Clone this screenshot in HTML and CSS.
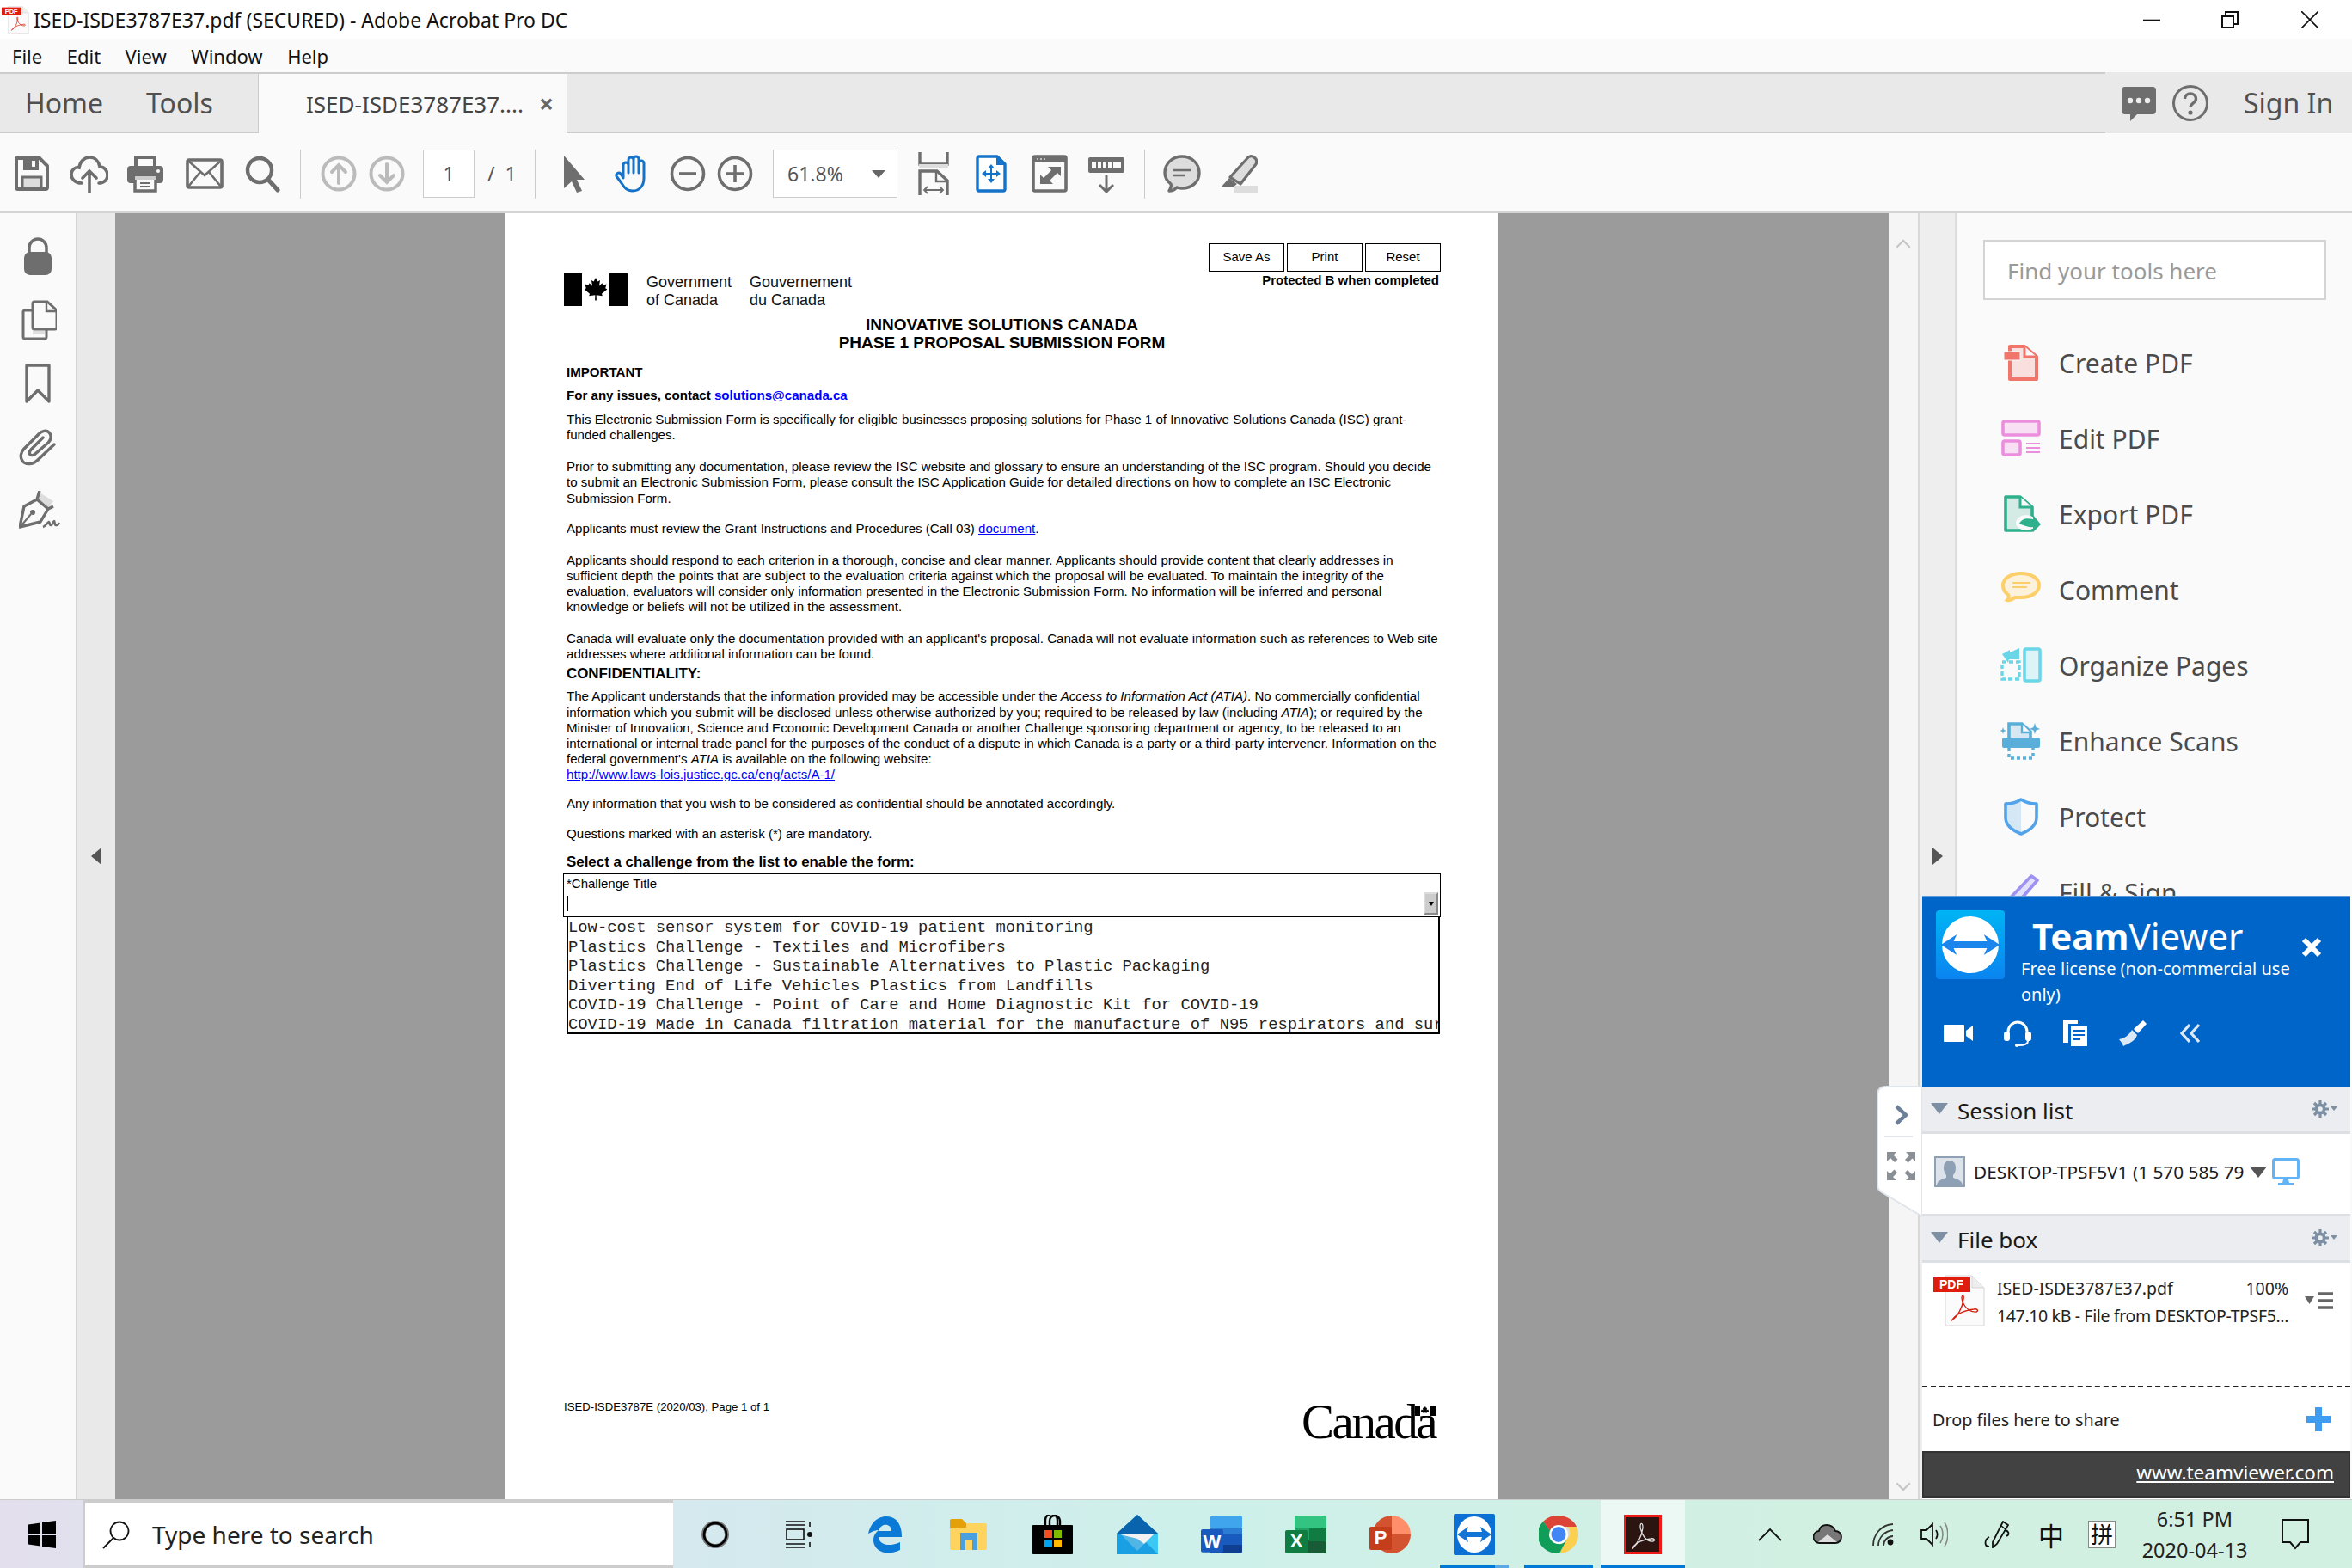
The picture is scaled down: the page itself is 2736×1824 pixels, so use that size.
FILE: index.html
```html
<!DOCTYPE html>
<html lang="en">
<head>
<meta charset="utf-8">
<title>ISED-ISDE3787E37.pdf (SECURED) - Adobe Acrobat Pro DC</title>
<link rel="stylesheet" href="styles.css">
</head>
<body>
<svg class="sprite" width="0" height="0">
  <symbol id="pdfdoc" viewBox="0 0 60 60">
    <path d="M14 1h31l14 14v44H14z" fill="#fbfbfb" stroke="#d5d5d5" stroke-width="1"/>
    <path d="M45 1v14h14" fill="#eee" stroke="#d5d5d5"/>
    <rect x="0" y="3" width="43" height="17" fill="#e01c0c"/>
    <text x="21" y="16" class="pdf-tag">PDF</text>
    <path d="M22 52c6-3 12-14 13-24 1-5-2-5-2-1 1 8 8 17 17 16 3-1 1-4-3-3-9 1-20 5-24 11-2 2-2 3-1 1z" fill="none" stroke="#d5200f" stroke-width="1.4"/>
  </symbol>
  <symbol id="gear" viewBox="0 0 30 20">
    <g fill="#7d8fa3"><circle cx="10" cy="10" r="6.5"/><g stroke="#7d8fa3" stroke-width="3.2"><path d="M10 0v20M0 10h20M3 3l14 14M17 3L3 17"/></g></g>
    <circle cx="10" cy="10" r="2.8" fill="#ebedf0"/><path d="M22 7h8l-4 5z" fill="#7d8fa3"/>
  </symbol>
</svg>

<header class="titlebar">
  <svg class="title-icon" width="32" height="32"><use href="#pdfdoc"/></svg>
  <span class="title-text">ISED-ISDE3787E37.pdf (SECURED) - Adobe Acrobat Pro DC</span>
  <div class="win-ctrls">
    <svg width="20" height="20" viewBox="0 0 20 20"><path d="M0 10.5h20" stroke="#111" stroke-width="1.6"/></svg>
    <svg width="20" height="20" viewBox="0 0 20 20"><path d="M1 6h13v13H1zM5 6V1h14v14h-5" fill="none" stroke="#111" stroke-width="2"/></svg>
    <svg width="20" height="20" viewBox="0 0 20 20"><path d="M0 0l20 20M20 0L0 20" stroke="#111" stroke-width="1.6"/></svg>
  </div>
</header>

<nav class="menubar"><span>File</span><span>Edit</span><span>View</span><span>Window</span><span>Help</span></nav>

<div class="tabbar">
  <div class="tab-nav"><span>Home</span><span>Tools</span></div>
  <div class="tab-active"><span class="tab-name">ISED-ISDE3787E37....</span><span class="tab-x">×</span></div>
  <div class="tab-fill"></div>
  <div class="tab-right">
    <svg width="42" height="42" viewBox="0 0 42 42"><path d="M5 2h32a4 4 0 0 1 4 4v24a4 4 0 0 1-4 4H19L11 42v-8H5a4 4 0 0 1-4-4V6a4 4 0 0 1 4-4z" fill="#6e6e6e"/><circle cx="11" cy="18" r="3.2" fill="#eee"/><circle cx="21" cy="18" r="3.2" fill="#eee"/><circle cx="31" cy="18" r="3.2" fill="#eee"/></svg>
    <svg width="42" height="42" viewBox="0 0 42 42"><circle cx="21" cy="21" r="19.5" fill="none" stroke="#6e6e6e" stroke-width="3"/><path d="M14.5 16c0-8 13-8 13 0 0 5-6.500 5-6.500 10" fill="none" stroke="#6e6e6e" stroke-width="3.400"/><circle cx="21" cy="32" r="2.600" fill="#6e6e6e"/></svg>
    <span class="sign-in">Sign In</span>
  </div>
</div>

<div class="toolbar">
  <svg class="tb" viewBox="0 0 44 44"><path d="M4 4h27l9 9v25a2 2 0 0 1-2 2H6a2 2 0 0 1-2-2z" fill="#fafafa" stroke="#6e6e6e" stroke-width="4" stroke-linejoin="round"/><path d="M12 4h18v14H12z" fill="#6e6e6e"/><rect x="22" y="7" width="4" height="7" fill="#fafafa"/><rect x="11" y="26" width="22" height="13" fill="#ddd" stroke="#6e6e6e" stroke-width="3"/></svg>
  <svg class="tb" viewBox="0 0 44 44"><path d="M13 33C5 33 1 28 1 23c0-6 5-9 9-8C11 8 16 3 22 3c7 0 11 5 12 11 5 0 9 4 9 10 0 5-4 9-10 9" fill="none" stroke="#6e6e6e" stroke-width="3.600" stroke-linecap="round"/><path d="M22 44V19M14 27l8-8 8 8" fill="none" stroke="#6e6e6e" stroke-width="3.600" stroke-linecap="round"/></svg>
  <svg class="tb m-print" viewBox="0 0 44 44"><path d="M11 3h22v12H11z" fill="#fafafa" stroke="#6e6e6e" stroke-width="4"/><rect x="1" y="13" width="42" height="20" rx="4" fill="#6e6e6e"/><rect x="10" y="26" width="24" height="16" fill="#fafafa" stroke="#6e6e6e" stroke-width="3.500"/><rect x="10" y="25" width="24" height="4" fill="#ccc"/><path d="M16 33h12M16 37h12" stroke="#6e6e6e" stroke-width="2"/><circle cx="37" cy="19" r="2" fill="#fafafa"/></svg>
  <svg class="tb m-mail" viewBox="0 0 44 44"><rect x="2" y="6" width="40" height="32" rx="2" fill="none" stroke="#6e6e6e" stroke-width="3.600"/><path d="M3 7l19 17L41 7M3 37l14-17M41 37L27 20" fill="none" stroke="#6e6e6e" stroke-width="2.600"/></svg>
  <svg class="tb m-find" viewBox="0 0 44 44"><circle cx="19" cy="18" r="14" fill="none" stroke="#6e6e6e" stroke-width="4.400"/><path d="M29 29l11 12" stroke="#6e6e6e" stroke-width="5" stroke-linecap="round"/></svg>
  <i class="tb-sep m-sep1"></i>
  <svg class="tb m-up" viewBox="0 0 44 44"><circle cx="22" cy="22" r="18.500" fill="none" stroke="#bbb" stroke-width="4"/><path d="M22 33V12M14 20l8-8 8 8" fill="none" stroke="#bbb" stroke-width="4" stroke-linecap="round"/></svg>
  <svg class="tb m-down" viewBox="0 0 44 44"><circle cx="22" cy="22" r="18.500" fill="none" stroke="#bbb" stroke-width="4"/><path d="M22 11v21M14 24l8 8 8-8" fill="none" stroke="#bbb" stroke-width="4" stroke-linecap="round"/></svg>
  <div class="page-input">1</div>
  <span class="page-total">/&nbsp;&nbsp;1</span>
  <i class="tb-sep m-sep2"></i>
  <svg class="tb m-cursor" viewBox="0 0 44 44"><path d="M10 1l24 28-9 0 6 13-6 2-6-13-9 8z" fill="#6e6e6e"/></svg>
  <svg class="tb m-hand" viewBox="-3 0 44 44"><path d="M11 27V12a3 3 0 0 1 6 0v9V6a3 3 0 0 1 6 0v15V5a3 3 0 0 1 6 0v16V10a3 3 0 0 1 6 0v17c0 9-5 15-13 15-7 0-10-4-13-9l-6-8a3 3 0 0 1 5-3z" fill="none" stroke="#1473c9" stroke-width="3" stroke-linejoin="round"/></svg>
  <svg class="tb m-minus" viewBox="0 0 44 44"><circle cx="22" cy="22" r="18.500" fill="none" stroke="#6e6e6e" stroke-width="3.600"/><path d="M12 22h20" stroke="#6e6e6e" stroke-width="3.600"/></svg>
  <svg class="tb m-plus" viewBox="0 0 44 44"><circle cx="22" cy="22" r="18.500" fill="none" stroke="#6e6e6e" stroke-width="3.600"/><path d="M12 22h20M22 12v20" stroke="#6e6e6e" stroke-width="3.600"/></svg>
  <div class="zoom-box"><span>61.8%</span><i class="caret"></i></div>
  <svg class="tb m-fitw" viewBox="0 0 44 50"><path d="M6 0v14h32V0" fill="none" stroke="#6e6e6e" stroke-width="3.400"/><rect x="5" y="14" width="34" height="4" fill="#ddd"/><path d="M6 50V22h20l12 11v17" fill="none" stroke="#6e6e6e" stroke-width="3.400"/><path d="M25 22v12h13" fill="none" stroke="#6e6e6e" stroke-width="2.400"/><path d="M11 44h22M15 40l-4 4 4 4M29 40l4 4-4 4" fill="none" stroke="#6e6e6e" stroke-width="1.800"/></svg>
  <svg class="tb m-fitp" viewBox="0 0 44 44"><path d="M8 2h21l9 9v29a2 2 0 0 1-2 2H8a2 2 0 0 1-2-2V4a2 2 0 0 1 2-2z" fill="#fff" stroke="#1473c9" stroke-width="3.400" stroke-linejoin="round"/><path d="M28 2v10h10" fill="#1473c9"/><path d="M22 11l4 5h-3v5h5v-3l5 4-5 4v-3h-5v5h3l-4 5-4-5h3v-5h-5v3l-5-4 5-4v3h5v-5h-3z" fill="#1473c9"/></svg>
  <svg class="tb m-full" viewBox="0 0 44 44"><rect x="4" y="2" width="38" height="40" rx="2" fill="none" stroke="#6e6e6e" stroke-width="3.600"/><rect x="4" y="2" width="38" height="7" fill="#6e6e6e"/><path d="M8 5h2M12 5h2M16 5h2" stroke="#ddd" stroke-width="1.400"/><path d="M36 14v11l-4-4-9 9 4 4H12V23l4 4 9-9-4-4z" fill="#6e6e6e"/></svg>
  <svg class="tb m-rule" viewBox="0 0 44 44"><rect x="1" y="3" width="42" height="18" rx="2" fill="#6e6e6e"/><rect x="5" y="8" width="34" height="8" fill="#fafafa"/><path d="M11 8v8M17 8v8M23 8v8M29 8v8" stroke="#6e6e6e" stroke-width="2"/><path d="M22 24v19M14 35l8 8 8-8" fill="none" stroke="#6e6e6e" stroke-width="3"/></svg>
  <i class="tb-sep m-sep3"></i>
  <svg class="tb m-comm" viewBox="0 0 44 44"><path d="M22 2c11 0 20 8 20 19s-9 18-20 18c-3 0-4-.500-6-1-2 2-5 4-9 4 2-3 3-5 2-8-4-3-7-8-7-13C2 10 11 2 22 2z" fill="#ddd" stroke="#6e6e6e" stroke-width="3.400" stroke-linejoin="round"/><path d="M12 18h20M12 24h14" stroke="#6e6e6e" stroke-width="2.400"/></svg>
  <svg class="tb m-high" viewBox="0 0 44 44"><path d="M33 3q4-3 8 1 3 3 1 7L24 34l-12-8z" fill="#ddd" stroke="#6e6e6e" stroke-width="3.200" stroke-linejoin="round"/><path d="M11 27l9 7-5 4H1z" fill="#6e6e6e"/><rect x="16" y="36" width="28" height="8" fill="#ddd"/></svg>
</div>

<main class="main">
  <aside class="rail">
    <svg width="44" height="46" viewBox="0 0 44 46"><path d="M12 19v-6a10 10 0 0 1 20 0v6" fill="none" stroke="#6e6e6e" stroke-width="3.500"/><rect x="6" y="18" width="32" height="27" rx="7" fill="#6e6e6e"/></svg>
    <svg width="44" height="46" viewBox="0 0 44 46"><path d="M18 2h15l11 10v20a2 2 0 0 1-2 2H18a2 2 0 0 1-2-2V4a2 2 0 0 1 2-2z" fill="none" stroke="#6e6e6e" stroke-width="3"/><path d="M32 2v11h12" fill="none" stroke="#6e6e6e" stroke-width="2.400"/><path d="M15 12H7a2 2 0 0 0-2 2v29a2 2 0 0 0 2 2h23a2 2 0 0 0 2-2v-9" fill="none" stroke="#6e6e6e" stroke-width="3"/><rect x="16" y="36" width="14" height="4" fill="#ddd"/></svg>
    <svg width="44" height="46" viewBox="0 0 44 46"><path d="M9 2h26v42L22 31 9 44z" fill="none" stroke="#6e6e6e" stroke-width="3.400" stroke-linejoin="round"/></svg>
    <svg width="44" height="46" viewBox="0 0 44 46"><path d="M41 20L22 38c-6 6-15 6-18 1-3-4-2-10 2-14l17-17c4-4 9-5 12-2 3 3 3 8-1 12L19 31c-2 2-5 2-6 1-1-2-1-4 1-6l14-14" fill="none" stroke="#6e6e6e" stroke-width="3.400" stroke-linecap="round"/></svg>
    <svg width="48" height="46" viewBox="0 0 48 46"><path d="M24 2l16 10-6 8-12-9z" fill="#ddd"/><path d="M24 0l-3 10L6 18 1 42l24-6 9-15 6-3M21 10l13 11" fill="none" stroke="#6e6e6e" stroke-width="3.400" stroke-linejoin="round"/><path d="M3 40l11-13" stroke="#6e6e6e" stroke-width="2"/><circle cx="16" cy="25" r="3" fill="#6e6e6e"/><path d="M28 42c3-1 5-5 7-6 1 0 0 4 2 4s3-5 4-5 0 5 2 5 3-1 4-3" fill="none" stroke="#6e6e6e" stroke-width="2.600"/></svg>
  </aside>
  <div class="nav-col"><i class="arrow-left"></i></div>
  <section class="viewer">
    <article class="page">
      <div class="doc-head">
        <div class="gov">
          <svg class="gov-flag" viewBox="0 0 74 38"><rect width="21" height="38"/><rect x="53" width="21" height="38"/><svg x="23" y="5" width="28" height="28" viewBox="0 0 20 20"><path d="M10 0L11.700 3.200 13.600 2.200 12.800 7 15.300 4.400 16 6 19 5.400 18 8.800 19.500 9.600 15 13.400 15.600 15.200 10.500 14.400 10.600 19H9.400L9.500 14.400 4.400 15.200 5 13.400 .5 9.600 2 8.800 1 5.400 4 6 4.700 4.400 7.200 7 6.400 2.200 8.300 3.200z"/></svg></svg>
          <div class="gov-name">Government<br>of Canada</div>
          <div class="gov-name">Gouvernement<br>du Canada</div>
        </div>
        <div class="doc-actions">
          <div class="doc-btns"><span class="doc-btn">Save As</span><span class="doc-btn">Print</span><span class="doc-btn">Reset</span></div>
          <div class="protected">Protected B when completed</div>
        </div>
      </div>
      <h1 class="doc-title">INNOVATIVE SOLUTIONS CANADA<br>PHASE 1 PROPOSAL SUBMISSION FORM</h1>
      <p class="p b m15">IMPORTANT</p>
      <p class="p b m9">For any issues, contact <a href="#">solutions@canada.ca</a></p>
      <p class="p m10">This Electronic Submission Form is specifically for eligible businesses proposing solutions for Phase 1 of Innovative Solutions Canada (ISC) grant-<br>funded challenges.</p>
      <p class="p m19">Prior to submitting any documentation, please review the ISC website and glossary to ensure an understanding of the ISC program. Should you decide<br>to submit an Electronic Submission Form, please consult the ISC Application Guide for detailed directions on how to complete an ISC Electronic<br>Submission Form.</p>
      <p class="p m17">Applicants must review the Grant Instructions and Procedures (Call 03) <a href="#">document</a>.</p>
      <p class="p m19">Applicants should respond to each criterion in a thorough, concise and clear manner. Applicants should provide content that clearly addresses in<br>sufficient depth the points that are subject to the evaluation criteria against which the proposal will be evaluated. To maintain the integrity of the<br>evaluation, evaluators will consider only information presented in the Electronic Submission Form. No information will be inferred and personal<br>knowledge or beliefs will not be utilized in the assessment.</p>
      <p class="p m19">Canada will evaluate only the documentation provided with an applicant's proposal. Canada will not evaluate information such as references to Web site<br>addresses where additional information can be found.</p>
      <p class="p h m5">CONFIDENTIALITY:</p>
      <p class="p m8">The Applicant understands that the information provided may be accessible under the <em>Access to Information Act (ATIA)</em>. No commercially confidential<br>information which you submit will be disclosed unless otherwise authorized by you; required to be released by law (including <em>ATIA</em>); or required by the<br>Minister of Innovation, Science and Economic Development Canada or another Challenge sponsoring department or agency, to be released to an<br>international or internal trade panel for the purposes of the conduct of a dispute in which Canada is a party or a third-party intervener. Information on the<br>federal government's <em>ATIA</em> is available on the following website:<br><a href="#">http://www.laws-lois.justice.gc.ca/eng/acts/A-1/</a></p>
      <p class="p m16">Any information that you wish to be considered as confidential should be annotated accordingly.</p>
      <p class="p m17">Questions marked with an asterisk (*) are mandatory.</p>
      <p class="p h m15">Select a challenge from the list to enable the form:</p>
      <div class="field">
        <div class="field-label">*Challenge Title</div>
        <div class="field-row"><i class="field-caret"></i><span class="field-btn"><i></i></span></div>
      </div>
      <ul class="list">
        <li>Low-cost sensor system for COVID-19 patient monitoring</li>
        <li>Plastics Challenge - Textiles and Microfibers</li>
        <li>Plastics Challenge - Sustainable Alternatives to Plastic Packaging</li>
        <li>Diverting End of Life Vehicles Plastics from Landfills</li>
        <li>COVID-19 Challenge - Point of Care and Home Diagnostic Kit for COVID-19</li>
        <li>COVID-19 Made in Canada filtration material for the manufacture of N95 respirators and surgical masks</li>
      </ul>
      <div class="doc-foot">
        <span class="doc-ref">ISED-ISDE3787E (2020/03), Page 1 of 1</span>
        <span class="wordmark">Canada<svg class="wm-flag" viewBox="0 0 24 12"><rect width="6" height="12"/><rect x="18" width="6" height="12"/><path d="M12 1l1 2 1-.5-.3 3 1.500-1 1 2-2.500 2-2.200-.3-2.200.3-2.500-2 1-2 1.500 1-.3-3 1 .5z"/></svg></span>
      </div>
    </article>
  </section>
  <div class="scroll-col"><i class="scroll-up"></i><i class="scroll-down"></i></div>
  <div class="handle-col"><i class="arrow-right"></i></div>
  <aside class="tools">
    <div class="find">Find your tools here</div>
    <ul class="tool-list">
      <li><svg width="48" height="44" viewBox="0 0 48 44"><path d="M11 3h17l14 12v26H11z" fill="#f9e0de" stroke="#f0756a" stroke-width="4" stroke-linejoin="round"/><path d="M28 3v12h14" fill="#fafafa" stroke="#f0756a" stroke-width="3"/><rect x="4" y="9" width="19" height="10" fill="#f0756a" stroke="#fafafa" stroke-width="1"/></svg><span>Create PDF</span></li>
      <li><svg width="48" height="44" viewBox="0 0 48 44"><rect x="3" y="2" width="42" height="16" rx="2" fill="#f8dff4" stroke="#ec8ede" stroke-width="3.600"/><rect x="3" y="25" width="20" height="16" rx="2" fill="#f8dff4" stroke="#ec8ede" stroke-width="3.600"/><path d="M30 28h16M30 33h16M30 38h16" stroke="#ec8ede" stroke-width="1.800"/></svg><span>Edit PDF</span></li>
      <li><svg width="48" height="44" viewBox="0 0 48 44"><path d="M6 2h17l14 12v27H6z" fill="#d3ebe4" stroke="#2fb08d" stroke-width="3.600" stroke-linejoin="round"/><path d="M23 2v12h14" fill="#fafafa" stroke="#2fb08d" stroke-width="3"/><ellipse cx="30" cy="32" rx="12" ry="9" fill="#fafafa"/><path d="M22 33c4-7 10-6 16-5v-5l9 11-9 9v-6c-5 1-11-2-16-4z" fill="#2fb08d"/></svg><span>Export PDF</span></li>
      <li><svg width="48" height="44" viewBox="0 0 48 44"><path d="M24 3c12 0 21 6 21 14s-9 14-21 14c-3 0-5 0-7 0-3 2-6 4-9 3 2-2 2-5 1-6C5 25 3 21 3 17 3 9 12 3 24 3z" fill="#fcf1da" stroke="#fdcf6a" stroke-width="4"/><path d="M14 14h21M14 19h17" stroke="#fdcf6a" stroke-width="1.800"/></svg><span>Comment</span></li>
      <li><svg width="48" height="44" viewBox="0 0 48 44"><rect x="28" y="3" width="18" height="37" rx="2" fill="#dcf3f7" stroke="#6bd6e8" stroke-width="3.600"/><path d="M2 18h20v20H2z" fill="none" stroke="#6bd6e8" stroke-width="3.400" stroke-dasharray="5 3"/><path d="M22 2v13H10l-1 4-7-10 9-5v3z" fill="#6bd6e8"/></svg><span>Organize Pages</span></li>
      <li><svg width="48" height="44" viewBox="0 0 48 44"><path d="M10 2h15l10 9v15H10z" fill="#d7e8f2" stroke="#5aaeda" stroke-width="3.600"/><path d="M25 2v10h10" fill="#fafafa" stroke="#5aaeda" stroke-width="2.400"/><rect x="2" y="18" width="44" height="12" rx="2" fill="#5aaeda"/><path d="M10 30v12h28V30" fill="none" stroke="#5aaeda" stroke-width="3.400" stroke-dasharray="4 3"/><path d="M40 1l1.500 5L46 8l-4.500 1.500L40 14l-1.500-4.500L34 8l4.500-2zM3 6l1 3 3 1-3 1-1 3-1-3-3-1 3-1z" fill="#5aaeda"/></svg><span>Enhance Scans</span></li>
      <li><svg width="48" height="44" viewBox="0 0 48 44"><path d="M24 22V3C18 7 12 7 6 7v16c0 9 8 15 18 19z" fill="#d5e6f5"/><path d="M24 2c-6 4-12 5-18 5v16c0 9 8 15 18 19 10-4 18-10 18-19V7c-6 0-12-1-18-5z" fill="none" stroke="#52a3ea" stroke-width="3.600" stroke-linejoin="round"/></svg><span>Protect</span></li>
      <li><svg width="48" height="44" viewBox="0 0 48 44"><path d="M36 3l7 5-28 32-9 2 1-9z" fill="#e4e1fb" stroke="#9d91f2" stroke-width="3.600" stroke-linejoin="round"/></svg><span>Fill &amp; Sign</span></li>
    </ul>
  </aside>

  <svg class="tv-flap" viewBox="0 0 56 153"><path d="M54 1H12Q2 1 2 11V115q0 6 5 9l47 28z" fill="#fff" stroke="#dfe5ea" stroke-width="2"/><path d="M24 24l11 10-11 10" fill="none" stroke="#6d8099" stroke-width="4.400"/><path d="M10 59h33" stroke="#dfe5ea" stroke-width="2"/><g fill="#8a8f95"><path d="M13 77h11l-3.500 3.500 5 5-3.500 3.500-5-5-4 4zM46 77v11l-3.500-3.500-5 5-3.500-3.500 5-5-4-4zM13 110V99l3.500 3.500 5-5 3.500 3.500-5 5 4 4zM46 110H35l3.500-3.500-5-5 3.500-3.500 5 5 4-4z"/></g></svg>

  <aside class="tv">
    <div class="tv-head">
      <svg class="tv-logo" viewBox="0 0 80 80"><defs><linearGradient id="tvg" x1="0" y1="0" x2="0" y2="1"><stop offset="0" stop-color="#00b4f5"/><stop offset="1" stop-color="#0a84f0"/></linearGradient></defs><rect width="80" height="80" rx="4" fill="url(#tvg)"/><circle cx="40" cy="40" r="33" fill="#fff"/><path d="M3 40l20-12-4 8h42l-4-8 20 12-20 12 4-8H19l4 8z" transform="translate(3 0) scale(.925 1)" fill="#1b85ee"/></svg>
      <div class="tv-copy">
        <div class="tv-name"><b>Team</b>Viewer</div>
        <div class="tv-lic">Free license (non-commercial use<br>only)</div>
      </div>
      <svg class="tv-close" width="24" height="24" viewBox="0 0 24 24"><path d="M3 3l18 18M21 3L3 21" stroke="#fff" stroke-width="6"/></svg>
      <div class="tv-icons">
        <svg width="34" height="32" viewBox="0 0 34 32"><rect y="6" width="24" height="20" rx="1" fill="#fff"/><path d="M26 13l8-6v18l-8-6z" fill="#fff"/></svg>
        <svg width="34" height="32" viewBox="0 0 34 32"><path d="M6 20v-6a11 11 0 0 1 22 0v6" fill="none" stroke="#fff" stroke-width="3"/><rect x="1" y="14" width="7" height="11" rx="3" fill="#fff"/><rect x="26" y="14" width="7" height="11" rx="3" fill="#fff"/><path d="M29 25c0 4-5 5-11 5" fill="none" stroke="#fff" stroke-width="2"/><circle cx="16" cy="30" r="2" fill="#fff"/></svg>
        <svg width="30" height="32" viewBox="0 0 30 32"><path d="M1 1h17v4H7v22H1z" fill="#fff"/><rect x="10" y="8" width="19" height="23" fill="#fff"/><path d="M13 13h13M13 18h13M13 23h8" stroke="#0065c8" stroke-width="2"/></svg>
        <svg width="34" height="32" viewBox="0 0 34 32"><path d="M29 1l4 4-10 11-5-5z" fill="#fff"/><path d="M16 12l6 6c-2 7-10 10-16 13 0 0-1-3-2-4l-3-4c6-1 12-5 15-11z" fill="#dce9f7"/></svg>
        <svg class="tv-back" width="24" height="32" viewBox="0 0 24 32"><path d="M11 6L2 16l9 10M22 6l-9 10 9 10" fill="none" stroke="#dce9f7" stroke-width="3.200"/></svg>
      </div>
    </div>
    <div class="tv-sec"><i class="tv-tri"></i><span>Session list</span><svg class="tv-gear" viewBox="0 0 30 20"><use href="#gear"/></svg></div>
    <div class="tv-session">
      <svg class="tv-avatar" viewBox="0 0 36 36"><rect width="36" height="36" fill="#8ea0b4"/><rect x="2" y="2" width="32" height="32" fill="#dde3ea"/><path d="M3 34c0-6 8-8 11-9v-3c-2-2-3-5-3-9 0-5 3-8 7-8s7 3 7 8c0 4-1 7-3 9v3c3 1 11 3 11 9z" fill="#8ea0b4"/></svg>
      <span class="tv-host">DESKTOP-TPSF5V1 (1 570 585 79</span>
      <i class="tv-dd"></i>
      <svg class="tv-mon" viewBox="0 0 32 33"><rect x="1.500" y="1.500" width="29" height="22" rx="2" fill="#fff" stroke="#63b4f7" stroke-width="3"/><path d="M13 25h6l1 4h5v3H7v-3h5z" fill="#63b4f7"/></svg>
    </div>
    <div class="tv-sec"><i class="tv-tri"></i><span>File box</span><svg class="tv-gear" viewBox="0 0 30 20"><use href="#gear"/></svg></div>
    <div class="tv-files">
      <div class="tv-file">
        <svg class="tv-pdf" width="60" height="60"><use href="#pdfdoc"/></svg>
        <div class="tv-file-text">
          <div class="tv-file-top"><span>ISED-ISDE3787E37.pdf</span><span>100%</span></div>
          <div class="tv-file-sub">147.10 kB - File from DESKTOP-TPSF5...</div>
        </div>
        <svg class="tv-menu" width="33" height="20" viewBox="0 0 33 20"><path d="M0 5h11l-5.500 9z" fill="#666"/><path d="M15 2h18M15 10h18M15 18h18" stroke="#666" stroke-width="3.400"/></svg>
      </div>
    </div>
    <div class="tv-drop"><span>Drop files here to share</span><svg width="28" height="28" viewBox="0 0 28 28"><path d="M10 0h8v10h10v8H18v10h-8V18H0v-8h10z" fill="#3f9cf0"/></svg></div>
    <div class="tv-foot"><a href="#">www.teamviewer.com</a></div>
  </aside>
</main>

<footer class="taskbar">
  <div class="start"><svg width="32" height="32" viewBox="0 0 32 32"><path d="M0 4.500l14-2V15H0zM16 2l16-2v15H16zM0 17h14v12.500l-14-2zM16 17h16v15l-16-2z" fill="#000"/></svg></div>
  <div class="search"><svg width="34" height="34" viewBox="0 0 34 34"><circle cx="21" cy="13" r="10.500" fill="none" stroke="#111" stroke-width="1.800"/><path d="M14 21L2 33" stroke="#111" stroke-width="1.800"/></svg><span>Type here to search</span></div>
  <div class="slot s-cortana"><svg width="32" height="32" viewBox="0 0 32 32"><circle cx="16" cy="16" r="13.500" fill="none" stroke="#777" stroke-width="5"/><circle cx="16" cy="16" r="13" fill="none" stroke="#000" stroke-width="2.600"/></svg></div>
  <div class="slot s-task"><svg width="32" height="32" viewBox="0 0 32 32"><path d="M0 1h22M0 5h22M0 27h22M0 31h22" stroke="#111" stroke-width="1.600"/><rect x="1" y="10" width="20" height="12" fill="none" stroke="#111" stroke-width="1.600"/><circle cx="28" cy="16" r="3" fill="#111"/><path d="M28 2v5M28 25v5" stroke="#111" stroke-width="1.600"/></svg></div>
  <div class="slot"><svg width="40" height="44" viewBox="0 0 40 44"><path d="M1 21C4 7 13 1 22 1c11 0 18 8 18 24H13c1 9 12 12 25 6v9c-14 7-30 3-31-11 0-5 2-9 6-12-5 0-9 3-12 4zM13 18h15c0-9-12-10-15 0z" fill="#0b7ad6"/></svg></div>
  <div class="slot"><svg width="44" height="36" viewBox="0 0 44 36"><rect y="5" width="43" height="31" rx="2" fill="#ffd45e"/><path d="M0 2a2 2 0 0 1 2-2h12l5 5v5H0z" fill="#e3a008"/><rect x="12" y="16" width="20" height="20" fill="#4a9fde"/><rect x="18" y="24" width="8" height="12" fill="#ffd45e"/></svg></div>
  <div class="slot"><svg width="48" height="46" viewBox="0 0 48 46"><path d="M15 13V6a7 7 0 0 1 14 0v7M20 13V7a5 5 0 0 1 12 0v6" fill="none" stroke="#000" stroke-width="2.400"/><rect y="12" width="47" height="34" rx="1" fill="#000"/><rect x="14" y="18" width="9" height="9" fill="#f25022"/><rect x="25" y="18" width="9" height="9" fill="#7fba00"/><rect x="14" y="29" width="9" height="9" fill="#00a4ef"/><rect x="25" y="29" width="9" height="9" fill="#ffb900"/></svg></div>
  <div class="slot"><svg width="48" height="46" viewBox="0 0 48 46"><path d="M0 22L24 0l24 22v24H0z" fill="#1b9de2"/><path d="M0 22h48v24L30 28z" fill="#3bc8f4"/><path d="M0 22L24 0l24 22-24 0z" fill="#0a64ad"/><path d="M4 22h40L24 42z" fill="#f2f2f2"/><path d="M0 22v24h48L24 28z" fill="#1ba1e2" opacity=".75"/></svg></div>
  <div class="slot"><svg width="48" height="44" viewBox="0 0 48 44"><rect x="11" width="37" height="15" rx="2" fill="#41a5ee"/><rect x="11" y="15" width="37" height="14" fill="#2b7cd3"/><rect x="11" y="29" width="37" height="15" rx="2" fill="#103f91"/><rect x="11" y="22" width="37" height="12" fill="#185abd"/><rect y="18" width="26" height="28" rx="2" fill="#185abd" transform="translate(0 -1) scale(1 .95)"/><text x="13" y="38" class="app-letter">W</text></svg></div>
  <div class="slot"><svg width="48" height="44" viewBox="0 0 48 44"><rect x="11" width="37" height="15" rx="2" fill="#33c481"/><rect x="11" y="15" width="37" height="15" fill="#21a366"/><rect x="11" y="29" width="37" height="15" rx="2" fill="#185c37"/><rect x="28" y="15" width="20" height="15" fill="#107c41"/><rect y="17" width="26" height="27" rx="2" fill="#107c41"/><text x="13" y="37" class="app-letter">X</text></svg></div>
  <div class="slot"><svg width="48" height="44" viewBox="0 0 48 44"><path d="M26 0a22 22 0 0 1 22 22H26z" fill="#ff8f6b"/><path d="M48 22A22 22 0 1 1 26 0v22z" fill="#d35230"/><rect y="17" width="26" height="27" rx="2" fill="#c43e1c" transform="translate(0 -4)"/><text x="13" y="33" class="app-letter">P</text></svg></div>
  <div class="slot run"><svg width="48" height="48" viewBox="0 0 48 48"><rect width="48" height="48" rx="2" fill="#0c6fd4"/><ellipse cx="24" cy="24" rx="20" ry="21" fill="#fff"/><path d="M4 24l13-9-2 6h18l-2-6 13 9-13 9 2-6H15l2 6z" fill="#1274d6"/></svg><i class="run-light"></i></div>
  <div class="slot run"><svg width="46" height="44" viewBox="0 0 46 44"><ellipse cx="23" cy="22" rx="23" ry="22" fill="#ddd"/><path d="M23 0a23 22 0 0 1 21 13H23a9 9 0 0 0-9 6L5 7a23 22 0 0 1 18-7z" fill="#db4437"/><path d="M44 13a23 22 0 0 1-20 31l9-17a9 9 0 0 0 0-14z" fill="#fcd04f"/><path d="M5 7a23 22 0 0 0 19 37l9-17a9 9 0 0 1-18-7z" fill="#0f9d58"/><ellipse cx="23" cy="22" rx="11" ry="11" fill="#fff"/><ellipse cx="23" cy="22" rx="8.500" ry="9" fill="#4285f4"/></svg></div>
  <div class="slot run active"><svg width="44" height="46" viewBox="0 0 44 46"><rect x="1.500" y="1.500" width="41" height="43" fill="#2c1410" stroke="#ed1c16" stroke-width="3"/><path d="M11 37c6-5 10-14 11-22 0-6-3-6-3-1 1 9 7 18 15 17 3-1 1-4-3-3-8 1-16 4-19 9-2 3-2 3-1 0z" fill="none" stroke="#ddd" stroke-width="1.300"/></svg></div>
  <div class="tray">
    <svg class="t-up" width="30" height="16" viewBox="0 0 30 16"><path d="M2 15L15 2l13 13" fill="none" stroke="#111" stroke-width="1.800"/></svg>
    <svg class="t-cloud" width="34" height="24" viewBox="0 0 34 24"><path d="M8 22a7 7 0 0 1-1-14C8 3 12 1 16 1c5 0 8 2 10 7 4 0 7 3 7 7s-3 7-7 7z" fill="#777" stroke="#111" stroke-width="1.800"/><path d="M6 21l11-9 11 9z" fill="#ddd"/></svg>
    <svg class="t-wifi" width="26" height="26" viewBox="0 0 26 26"><path d="M1 26C1 13 10 2 24 1M7 26c0-9 7-17 17-18M13 26c0-6 5-11 11-11" fill="none" stroke="#333" stroke-width="1.800"/><circle cx="21" cy="22" r="3.400" fill="#111"/></svg>
    <svg class="t-vol" width="32" height="30" viewBox="0 0 32 30"><path d="M1 10h6l7-7v24l-7-7H1z" fill="none" stroke="#111" stroke-width="1.800"/><path d="M18 10c2 3 2 7 0 10" fill="none" stroke="#111" stroke-width="1.800"/><path d="M23 5c4 6 4 14 0 20M28 1c5 8 5 20 0 28" fill="none" stroke="#888" stroke-width="1.600"/></svg>
    <svg class="t-pen" width="32" height="32" viewBox="0 0 32 32"><path d="M22 1l6 4-13 22-5 4 0-6z" fill="none" stroke="#111" stroke-width="1.800"/><path d="M20 6l5 4" stroke="#111" stroke-width="1.600"/><path d="M24 11c5 1 6 5 2 7M6 19c-6 3-6 11 0 11" fill="none" stroke="#111" stroke-width="1.800"/></svg>
    <span class="ime">中</span>
    <span class="ime-box">拼</span>
    <div class="clock"><span>6:51 PM</span><span>2020-04-13</span></div>
    <svg class="t-note" width="32" height="36" viewBox="0 0 32 36"><path d="M1 1h30v26H22l-6 7-6-7H1z" fill="none" stroke="#111" stroke-width="2"/></svg>
  </div>
</footer>
</body>
</html>
```

FILE: styles.css
```css
* { box-sizing: border-box; }
html { height: 1824px; overflow: hidden; margin: 0; padding: 0; }
body {
  margin: 0; padding: 0;
  width: 2736px; height: 1824px; overflow: hidden; position: relative;
  display: flex; flex-direction: column;
  font-family: "Noto Sans", "Open Sans", sans-serif; color: #222; background: #fafafa;
}
.sprite { position: absolute; }
.pdf-tag { font: bold 14px "Liberation Sans", sans-serif; fill: #fff; text-anchor: middle; }
i { display: block; }
svg { flex: none; display: block; }

.titlebar { height: 45px; background: #fff; display: flex; align-items: center; padding-left: 2px; }
.title-text { margin-left: 5px; font-size: 23px; color: #111; white-space: nowrap; }
.win-ctrls { margin-left: auto; margin-right: 39px; display: flex; gap: 71px; }
.win-ctrls svg:last-child { margin-left: 2px; }

.menubar { height: 39px; background: #fafafa; display: flex; align-items: center; gap: 28.5px; padding-left: 14px; font-size: 22px; color: #111; }

.tabbar { height: 71px; display: flex; background: #e9e9e9; }
.tab-nav { width: 301px; display: flex; gap: 50px; padding-left: 29px; align-items: center; font-size: 32px; color: #505050; border-top: 2px solid #ccc; border-bottom: 2px solid #ccc; border-right: 1px solid #ccc; }
.tab-active { width: 359px; background: #fafafa; display: flex; align-items: center; padding-left: 55px; border-top: 2px solid #ccc; border-right: 1px solid #ccc; }
.tab-name { font-size: 26px; color: #444; white-space: nowrap; }
.tab-x { margin-left: 18px; font-size: 30px; font-weight: bold; color: #666; }
.tab-fill { flex: 1; border-top: 2px solid #ccc; border-bottom: 2px solid #ccc; }
.tab-right { width: 287px; display: flex; align-items: center; padding-left: 18px; }
.tab-right svg + svg { margin-left: 18px; }
.sign-in { margin-left: 41px; font-size: 32px; color: #505050; white-space: nowrap; }

.toolbar { height: 93px; background: #fafafa; border-bottom: 2px solid #d4d4d4; display: flex; align-items: center; padding: 3px 0 0 15px; }
.tb { width: 44px; height: 44px; margin-right: 23px; }
.tb-sep { width: 1px; height: 57px; background: #ccc; }
.m-find { margin-right: 22px; }
.m-print { margin-right: 25px; margin-left: -2px; }
.m-sep1 { margin-right: 22px; }
.m-up { margin-right: 12px; }
.m-down { margin-right: 20px; }
.page-input { width: 60px; height: 56px; background: #fff; border: 1px solid #ccc; display: flex; align-items: center; justify-content: center; font-size: 23px; color: #555; }
.page-total { margin-left: 15px; width: 55px; font-size: 23px; color: #555; white-space: nowrap; }
.m-sep2 { margin-right: 23px; }
.m-cursor { margin-right: 21px; }
.m-hand { margin-right: 23px; }
.m-minus { margin-right: 11px; }
.m-plus { margin-right: 22px; }
.zoom-box { width: 145px; height: 56px; background: #fff; border: 1px solid #ccc; display: flex; align-items: center; padding-left: 16px; font-size: 23px; color: #555; margin-right: 20px; }
.caret { margin-left: 33px; width: 0; height: 0; border-left: 8px solid transparent; border-right: 8px solid transparent; border-top: 9px solid #666; }
.m-fitw { height: 50px; }
.m-rule { margin-right: 22px; }
.m-sep3 { margin-right: 21px; }
.m-comm { margin-right: 22px; }

.main { height: 1496px; display: flex; }
.rail { width: 90px; background: #fafafa; border-right: 2px solid #d4d4d4; padding: 27px 0 0 22px; display: flex; flex-direction: column; gap: 28px; }
.nav-col { width: 44px; background: #e9e9e9; display: flex; align-items: center; justify-content: center; }
.arrow-left { width: 0; height: 0; border-top: 10px solid transparent; border-bottom: 10px solid transparent; border-right: 12px solid #555; }
.arrow-right { width: 0; height: 0; border-top: 10px solid transparent; border-bottom: 10px solid transparent; border-left: 12px solid #555; }
.viewer { width: 2063px; background: #9b9b9b; padding-left: 454px; overflow: hidden; }
.scroll-col { width: 36px; background: #f5f5f5; border-right: 2px solid #d8d8d8; display: flex; flex-direction: column; justify-content: space-between; align-items: center; padding: 33px 0 12px; }
.scroll-up, .scroll-down { width: 12px; height: 12px; border-left: 2px solid #c4c4c4; border-top: 2px solid #c4c4c4; }
.scroll-up { transform: rotate(45deg); }
.scroll-down { transform: rotate(225deg); }
.handle-col { width: 43px; background: #eee; border-right: 2px solid #ddd; display: flex; align-items: center; justify-content: center; }

/* PDF page */
.page { width: 1155px; height: 1496px; background: #fff; padding: 35px 67px 0; font-family: "Liberation Sans", Arial, sans-serif; color: #000; font-size: 15.1px; line-height: 18.1px; }
.doc-head { display: flex; justify-content: space-between; height: 73px; }
.gov { display: flex; margin-top: 35px; align-items: flex-start; }
.gov-flag { width: 74px; height: 38px; margin: 0 22px 0 1px; }
.gov-name { font-size: 18px; line-height: 21px; color: #111; white-space: nowrap; margin-right: 21px; }
.doc-actions { display: flex; flex-direction: column; align-items: flex-end; }
.doc-btns { display: flex; gap: 3px; }
.doc-btn { width: 88px; height: 33px; border: 1px solid #000; display: flex; align-items: center; justify-content: center; font-size: 15px; }
.protected { font-weight: bold; font-size: 15px; margin-top: 1px; margin-right: 2px; white-space: nowrap; }
.doc-title { margin: 11px 0 0; text-align: center; font-size: 19px; line-height: 21px; font-weight: bold; }
.p { margin: 0 0 0 4px; white-space: nowrap; }
.p a { color: #00f; }
.b { font-weight: bold; }
.h { font-weight: bold; font-size: 16.9px; }
.m5 { margin-top: 5px; } .m8 { margin-top: 8px; } .m9 { margin-top: 9px; } .m10 { margin-top: 10px; }
.m15 { margin-top: 15px; } .m16 { margin-top: 16px; } .m17 { margin-top: 17px; } .m19 { margin-top: 19px; }
.field { margin-top: 4px; height: 51px; border: 1.5px solid #000; padding: 2px 3px 0 3px; font-size: 15px; }
.field-label { line-height: 18px; }
.field-row { display: flex; align-items: flex-end; justify-content: space-between; height: 27px; }
.field-caret { width: 1px; height: 18px; background: #000; margin: 0 0 4px 1px; }
.field-btn { width: 17px; height: 26px; background: #ccc; border: 2px outset #ddd; display: flex; align-items: center; justify-content: center; margin-right: -1px; }
.field-btn i { width: 0; height: 0; border-left: 3px solid transparent; border-right: 3px solid transparent; border-top: 5px solid #000; }
.list { list-style: none; margin: -2px 1px 0 4px; padding: 0; height: 138px; border: 2px solid #000; overflow: hidden; font-family: "Liberation Mono", "Courier New", monospace; font-size: 18.85px; line-height: 22.5px; white-space: nowrap; padding-top: 1px; color: #222; }
.doc-foot { margin-top: 425px; display: flex; justify-content: space-between; align-items: flex-start; padding: 0 0 0 1px; }
.doc-ref { font-size: 13.2px; }
.wordmark { position: relative; font-family: "Liberation Serif", "Times New Roman", serif; font-size: 57px; line-height: 52px; letter-spacing: -2.5px; margin-right: 6px; color: #000; }
.wm-flag { position: absolute; right: 0; top: 7px; width: 24px; height: 12px; background: #fff; }

/* Tools pane */
.tools { width: 460px; background: #fafafa; padding: 31px 0 0 31px; overflow: hidden; }
.find { width: 399px; height: 70px; background: #fff; border: 2px solid #d4d4d4; display: flex; align-items: center; padding: 2px 0 0 26px; font-size: 26px; color: #9a9a9a; }
.tool-list { list-style: none; margin: 29px 0 0; padding: 0 0 0 20px; }
.tool-list li { height: 88px; display: flex; align-items: center; gap: 20px; font-size: 30px; color: #4b4b4b; white-space: nowrap; }

/* TeamViewer */
.tv-flap { position: absolute; left: 2182px; top: 1263px; width: 56px; height: 153px; z-index: 2; }
.tv { position: absolute; left: 2236px; top: 1042px; width: 498px; height: 702px; background: #fff; display: flex; flex-direction: column; z-index: 3; color: #1a1a1a; }
.tv-head { position: relative; height: 222px; background: #0065c8; color: #fff; padding: 22px 0 0 16px; border-top: 1px solid #5b9ad6; }
.tv-logo { position: absolute; left: 16px; top: 16px; width: 80px; height: 80px; }
.tv-copy { margin-left: 99px; }
.tv-name { font-size: 42px; line-height: 48px; padding-left: 13px; font-weight: 400; }
.tv-name b { font-weight: 700; }
.tv-lic { font-size: 20px; line-height: 30px; margin-top: -1px; white-space: nowrap; }
.tv-close { position: absolute; left: 441px; top: 47px; }
.tv-icons { position: absolute; left: 25px; top: 143px; display: flex; gap: 35px; align-items: center; }
.tv-back { margin-left: 3px; }
.tv-sec { height: 55px; background: #ebedf0; border-bottom: 3px solid #dcdfe3; display: flex; align-items: center; padding-left: 10px; font-size: 26px; color: #1a1a1a; line-height: 50px; }
.tv-sec span { padding-top: 3px; }
.tv-tri { width: 0; height: 0; border-left: 10px solid transparent; border-right: 10px solid transparent; border-top: 13px solid #7d8fa3; margin: -2px 11px 0 0; }
.tv-gear { width: 30px; height: 20px; margin: -1px 15px 0 auto; }
.tv-session { height: 95px; display: flex; align-items: center; padding: 0 0 5px 14px; border-bottom: 2px solid #dcdfe3; }
.tv-avatar { width: 36px; height: 36px; }
.tv-host { margin-left: 10px; width: 322px; font-size: 20.8px; white-space: nowrap; overflow: hidden; }
.tv-dd { width: 0; height: 0; border-left: 10px solid transparent; border-right: 10px solid transparent; border-top: 13px solid #555; margin-left: -1px; }
.tv-mon { width: 32px; height: 33px; margin-left: 6px; }
.tv-files { height: 145px; padding: 14px 20px 0 13px; border-bottom: 2px dashed #222; }
.tv-file { display: flex; align-items: flex-start; }
.tv-file-text { width: 341px; margin-left: 14px; font-size: 19.5px; line-height: 32px; white-space: nowrap; color: #222; }
.tv-file-top { display: flex; justify-content: space-between; }
.tv-file-sub { letter-spacing: -.35px; }
.tv-menu { margin: 20px 0 0 19px; }
.tv-drop { height: 74px; display: flex; align-items: center; justify-content: space-between; padding: 0 23px 0 12px; font-size: 19.8px; color: #222; }
.tv-foot { height: 54px; background: #424242; border: 2px solid #333; display: flex; align-items: center; justify-content: flex-end; padding: 0 17px 6px 0; font-size: 22.5px; }
.tv-foot a { color: #fff; }

/* Taskbar */
.taskbar { height: 80px; display: flex; align-items: center; background: linear-gradient(90deg, #e3dfed 0, #d5e9ee 800px, #cdf0ea 1400px, #d2f0e2 2100px, #d2f0e2 100%); border-top: 1px solid #ccc; }
.start { width: 97px; height: 100%; display: flex; align-items: center; justify-content: center; }
.search { width: 686px; height: 100%; background: #fff; border-top: 3px solid #ccc; border-bottom: 3px solid #ccc; border-left: 2px solid #ccc; display: flex; align-items: center; padding-left: 19px; gap: 25px; font-size: 28px; color: #222; white-space: nowrap; }
.slot { width: 98px; height: 100%; display: flex; align-items: center; justify-content: center; position: relative; }
.s-cortana { width: 97px; }
.s-task { width: 100px; }
.run::after { content: ""; position: absolute; left: 9px; right: 9px; bottom: 0; height: 4px; background: #0078d7; }
.run-light { position: absolute; right: 9px; bottom: 0; width: 16px; height: 4px; background: #5aa9e6; z-index: 1; }
.active { background: #ecf8f3; }
.active::after { left: 0; right: 0; }
.app-letter { font: bold 22px "Liberation Sans", sans-serif; fill: #fff; text-anchor: middle; }
.tray { display: flex; align-items: center; margin-left: 84px; height: 100%; }
.t-cloud { margin-left: 35px; }
.t-wifi { margin-left: 35px; }
.t-vol { margin-left: 30px; }
.t-pen { margin-left: 42px; }
.ime { margin-left: 31px; font-family: "Noto Sans CJK SC", sans-serif; font-size: 30px; color: #111; line-height: 1; }
.ime-box { margin-left: 28px; width: 32px; height: 32px; background: #fff; border: 1px solid #888; font-family: "Noto Sans CJK SC", sans-serif; font-size: 26px; line-height: 28px; text-align: center; color: #111; }
.clock { margin-left: 31px; width: 122px; display: flex; flex-direction: column; align-items: center; gap: 10px; font-size: 23.5px; line-height: 26px; white-space: nowrap; color: #222; }
.t-note { margin-left: 40px; }
```
